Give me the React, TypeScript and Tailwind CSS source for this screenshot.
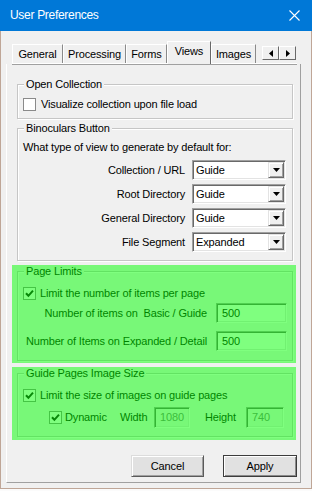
import React from 'react';

const font = "font-['Liberation_Sans',Arial,sans-serif]";

const tabs = [
  { label: 'General', w: 'w-[51px]' },
  { label: 'Processing', w: 'w-[63px]' },
  { label: 'Forms', w: 'w-[41px]' },
  { label: 'Views', w: 'w-[44px]', active: true },
  { label: 'Images', w: 'w-[45px]' },
];

const viewRows = [
  { label: 'Collection / URL', value: 'Guide' },
  { label: 'Root Directory', value: 'Guide' },
  { label: 'General Directory', value: 'Guide' },
  { label: 'File Segment', value: 'Expanded' },
];

function Check({ checked }: { checked?: boolean }) {
  return (
    <span className="w-[13px] h-[13px] shrink-0 bg-white border border-[#8a8a8a] flex items-center justify-center">
      {checked && (
        <svg width="9" height="9" viewBox="0 0 9 9">
          <path d="M1 4.2 L3.4 6.8 L8 1.6" stroke="#111" strokeWidth="2" fill="none" />
        </svg>
      )}
    </span>
  );
}

function Select({ value }: { value: string }) {
  return (
    <div className="w-[94px] h-[20px] flex items-center bg-white border border-t-[#a0a0a0] border-l-[#a0a0a0] border-b-white border-r-white shadow-[inset_1px_1px_0_#696969,inset_-1px_-1px_0_#e3e3e3]">
      <span className="flex-1 pl-[3px] leading-[13px]">{value}</span>
      <span className="w-[16px] h-[16px] mr-[1px] bg-[#f0f0f0] border border-t-[#e3e3e3] border-l-[#e3e3e3] border-b-[#696969] border-r-[#696969] shadow-[inset_1px_1px_0_white,inset_-1px_-1px_0_#a0a0a0] flex items-center justify-center">
        <svg width="7" height="4" viewBox="0 0 7 4">
          <path d="M0 0 H7 L3.5 4 Z" fill="#000" />
        </svg>
      </span>
    </div>
  );
}

function Field({ value, w, h = 'h-[20px]', disabled }: { value: string; w: string; h?: string; disabled?: boolean }) {
  return (
    <div
      className={`${w} ${h} flex items-center pl-[5px] border border-t-[#a0a0a0] border-l-[#a0a0a0] border-b-white border-r-white shadow-[inset_1px_1px_0_#696969,inset_-1px_-1px_0_#e3e3e3] ${
        disabled ? 'bg-[#f0f0f0] text-[#7a7a7a]' : 'bg-white'
      }`}
    >
      {value}
    </div>
  );
}

function Group({ title, className = '', children }: { title: string; className?: string; children: React.ReactNode }) {
  return (
    <fieldset className={`w-[276px] border border-[#c6c6c6] shadow-[inset_1px_1px_0_white,1px_1px_0_white] ${className}`}>
      <legend className="ml-[6px] px-[2px] leading-[13px] bg-[#f0f0f0]">{title}</legend>
      {children}
    </fieldset>
  );
}

function Highlight({ className = '', children }: { className?: string; children: React.ReactNode }) {
  return (
    <div className={`relative w-[284px] ml-[5px] pl-[5px] ${className}`}>
      {children}
      <div className="absolute inset-0 bg-[#00ff00]/50 pointer-events-none" />
    </div>
  );
}

function Button({ label, primary }: { label: string; primary?: boolean }) {
  return (
    <div
      className={`h-[22px] flex items-center justify-center bg-[#e1e1e1] ${
        primary
          ? 'w-[74px] border border-[#3c3c3c] shadow-[inset_1px_1px_0_white,inset_-1px_-1px_0_#8a8a8a]'
          : 'w-[73px] border border-t-[#dcdcdc] border-l-[#dcdcdc] border-b-[#5a5a5a] border-r-[#5a5a5a] shadow-[inset_1px_1px_0_white,inset_-1px_-1px_0_#a0a0a0]'
      }`}
    >
      {label}
    </div>
  );
}

export default function App() {
  return (
    <div className={`w-[312px] h-[491px] bg-[#fbfbfb] text-[11px] leading-[13px] tracking-[-0.15px] text-black ${font}`}>
      {/* Title bar */}
      <div className="h-[31px] bg-[#0078d7] flex items-center pl-[10px] pr-[12px] text-white text-[12px] tracking-[-0.3px]">
        <span className="flex-1">User Preferences</span>
        <svg width="11" height="11" viewBox="0 0 11 11">
          <path d="M0.5 0.5 L10.5 10.5 M10.5 0.5 L0.5 10.5" stroke="#fff" strokeWidth="1.1" />
        </svg>
      </div>

      <div className="h-[458px] bg-[#f0f0f0] border-x border-b border-[#bfa697] flex flex-col">
        {/* Tab strip */}
        <div className="ml-[11px] mt-[10px] w-[285px] h-[23px] flex items-end border-b border-white shadow-[0_1px_0_#a0a0a0]">
          {tabs.map((t) =>
            t.active ? (
              <div
                key={t.label}
                className={`${t.w} h-[23px] -mb-px relative z-10 bg-[#f0f0f0] border-l border-t border-white border-r border-r-[#696969] flex items-center justify-center pb-[3px]`}
              >
                {t.label}
              </div>
            ) : (
              <div
                key={t.label}
                className={`${t.w} h-[19px] border-l border-t border-white border-r border-r-[#8a8a8a] flex items-center justify-center`}
              >
                {t.label}
              </div>
            )
          )}
          <div className="ml-[6px] mb-[3px] flex">
            {['left', 'right'].map((d) => (
              <span
                key={d}
                className="w-[17px] h-[14px] bg-[#f0f0f0] border border-t-white border-l-white border-b-[#696969] border-r-[#696969] flex items-center justify-center"
              >
                <svg width="4" height="7" viewBox="0 0 4 7">
                  <path d={d === 'left' ? 'M4 0 V7 L0 3.5 Z' : 'M0 0 V7 L4 3.5 Z'} fill="#000" />
                </svg>
              </span>
            ))}
          </div>
        </div>

        {/* Tab page */}
        <div className="ml-[5px] w-[295px] h-[419px] border-l border-l-white border-r border-r-[#a0a0a0] border-b border-b-[#a0a0a0] flex flex-col">
          <Group title="Open Collection" className="ml-[10px] mt-[14px] pt-[7px] pb-[7px]">
            <div className="flex items-center gap-[5px] pl-[5px]">
              <Check />
              <span>Visualize collection upon file load</span>
            </div>
          </Group>

          <Group title="Binoculars Button" className="ml-[10px] mt-[3px] pt-[6px] pb-[8px]">
            <div className="pl-[5px]">What type of view to generate by default for:</div>
            <div className="mt-[6px] flex flex-col gap-[4px] pr-[6px]">
              {viewRows.map((r) => (
                <div key={r.label} className="flex items-center justify-end gap-[7px]">
                  <span>{r.label}</span>
                  <Select value={r.value} />
                </div>
              ))}
            </div>
          </Group>

          <Highlight className="mt-[4px] pb-[2px]">
            <Group title="Page Limits" className="pt-[9px] pb-[9px]">
              <div className="flex items-center gap-[4px] pl-[5px]">
                <Check checked />
                <span>Limit the number of items per page</span>
              </div>
              <div className="mt-[3px] flex items-center justify-end gap-[9px] pr-[5px]">
                <span className="whitespace-pre">Number of items on  Basic / Guide</span>
                <Field value="500" w="w-[71px]" />
              </div>
              <div className="mt-[8px] flex items-center justify-end gap-[9px] pr-[5px]">
                <span>Number of Items on Expanded / Detail</span>
                <Field value="500" w="w-[71px]" />
              </div>
            </Group>
          </Highlight>

          <Highlight className="mt-[4px] pb-[3px]">
            <Group title="Guide Pages Image Size" className="pt-[9px] pb-[8px]">
              <div className="flex items-center gap-[4px] pl-[5px]">
                <Check checked />
                <span>Limit the size of images on guide pages</span>
              </div>
              <div className="mt-[5px] flex items-center pl-[31px]">
                <Check checked />
                <span className="ml-[3px] w-[55px]">Dynamic</span>
                <span className="w-[34px]">Width</span>
                <Field value="1080" w="w-[36px]" h="h-[21px]" disabled />
                <span className="ml-[15px] w-[41px]">Height</span>
                <Field value="740" w="w-[38px]" h="h-[21px]" disabled />
              </div>
            </Group>
          </Highlight>

          <div className="mt-[15px] flex justify-end gap-[19px] pr-[3px]">
            <Button label="Cancel" />
            <Button label="Apply" primary />
          </div>
        </div>
      </div>
    </div>
  );
}
